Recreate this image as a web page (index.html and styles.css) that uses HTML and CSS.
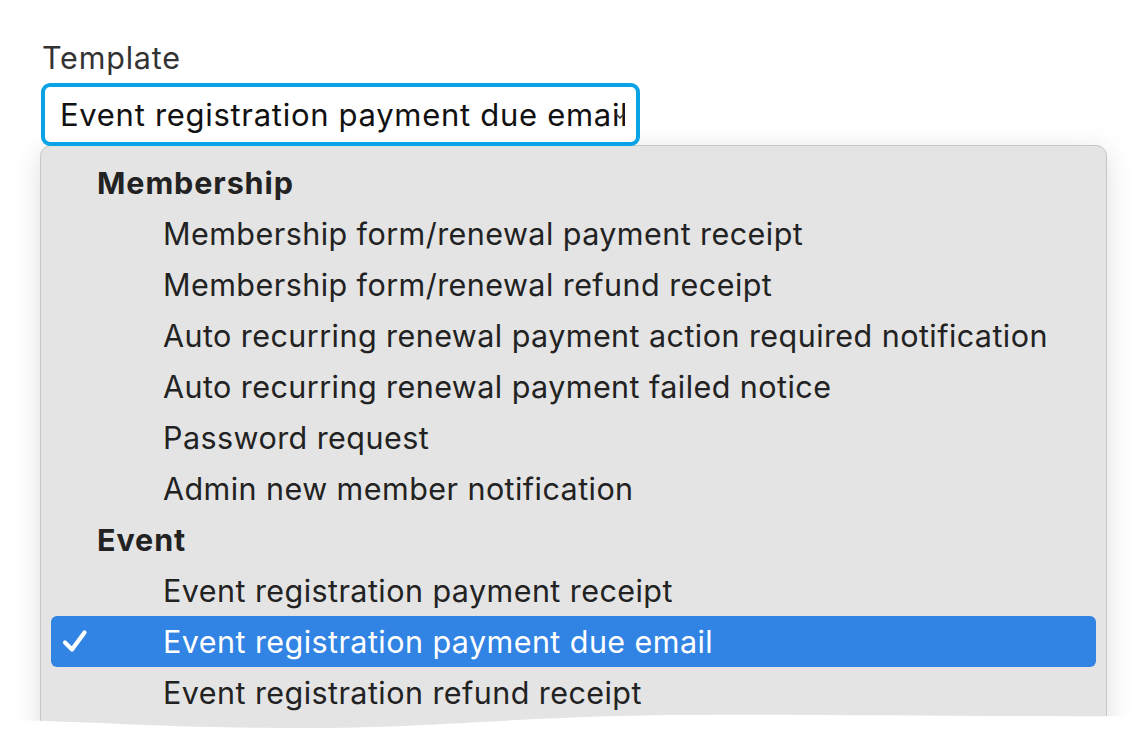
FILE: index.html
```html
<!DOCTYPE html>
<html lang="en">
<head>
<meta charset="utf-8">
<title>Template</title>
<link rel="stylesheet" href="styles.css">
</head>
<body>
<div class="page">
  <label class="field-label">Template</label>
  <div class="select">
    <span class="select-value">Event registration payment due email</span>
    <svg class="select-arrow" width="12" height="10" viewBox="0 0 12 10"><path d="M2 3 L6 7 L10 3" fill="none" stroke="#333" stroke-width="1.6" stroke-linecap="round" stroke-linejoin="round"/></svg>
  </div>
  <div class="menu">
    <div class="group">Membership</div>
    <div class="item">Membership form/renewal payment receipt</div>
    <div class="item">Membership form/renewal refund receipt</div>
    <div class="item">Auto recurring renewal payment action required notification</div>
    <div class="item">Auto recurring renewal payment failed notice</div>
    <div class="item">Password request</div>
    <div class="item">Admin new member notification</div>
    <div class="group">Event</div>
    <div class="item">Event registration payment receipt</div>
    <div class="item selected">
      <svg class="check" width="30" height="30" viewBox="0 0 30 30"><path d="M4 15.5 L11 22.5 L23.5 5.5" fill="none" stroke="#fff" stroke-width="4.2" stroke-linecap="round" stroke-linejoin="round"/></svg>
      Event registration payment due email
    </div>
    <div class="item">Event registration refund receipt</div>
  </div>
</div>
<svg class="tear" width="1140" height="40" viewBox="0 0 1140 40" preserveAspectRatio="none">
  <path d="M0 20 C 90 21, 160 28, 300 28 C 440 28, 520 16, 680 15 C 820 14, 980 17, 1140 16 L1140 40 L0 40 Z" fill="#fff"/>
</svg>
</body>
</html>
```
FILE: styles.css
```css
html, body {
  margin: 0;
  padding: 0;
  background: #fff;
  overflow: hidden;
  height: 737px;
}
body {
  font-family: Inter, "Noto Sans", "Liberation Sans", sans-serif;
  position: relative;
}
.page {
  padding: 40px 0 0 40px;
  display: flex;
  flex-direction: column;
  align-items: flex-start;
}
.field-label {
  font-size: 30.5px;
  letter-spacing: 0.8px;
  color: #333;
  line-height: 36px;
  margin-left: 2px;
  margin-bottom: 7px;
}
.select {
  position: relative;
  box-sizing: border-box;
  width: 599px;
  height: 63px;
  margin-left: 1px;
  border: 4px solid #0aa4e6;
  border-radius: 9px;
  background: #fff;
  padding: 0 0 0 15px;
  display: flex;
  align-items: center;
  overflow: hidden;
}
.select-value {
  font-size: 31px;
  letter-spacing: 0.7px;
  color: #111;
  white-space: nowrap;
  overflow: hidden;
  width: 565px;
  display: block;
}
.select-arrow {
  position: absolute;
  right: 10px;
  top: 24px;
}
.menu {
  box-sizing: border-box;
  width: 1067px;
  height: 610px;
  margin-top: -1px;
  background: #e4e4e4;
  border: 1px solid #c6c6c6;
  border-radius: 11px;
  box-shadow: 0 6px 28px rgba(0, 0, 0, 0.13);
  padding: 11px 10px 0 10px;
  display: flex;
  flex-direction: column;
}
.group, .item {
  height: 51px;
  flex: none;
  display: flex;
  align-items: center;
  font-size: 30.5px;
  letter-spacing: 0.44px;
  color: #222;
  white-space: nowrap;
  border-radius: 6px;
  position: relative;
}
.group {
  font-weight: 700;
  letter-spacing: 0.9px;
  padding-left: 46px;
}
.item {
  padding-left: 112px;
}
.item.selected {
  background: #3183e4;
  color: #fff;
}
.check {
  position: absolute;
  left: 10px;
  top: 11px;
}
.tear {
  position: absolute;
  left: 0;
  top: 700px;
  display: block;
}
```
